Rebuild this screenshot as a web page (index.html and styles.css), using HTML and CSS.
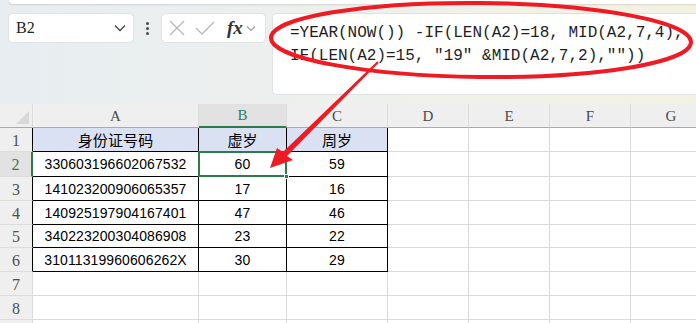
FILE: index.html
```html
<!DOCTYPE html>
<html lang="zh-CN">
<head>
    <meta charset="UTF-8">
    <title>年龄公式</title>
    <link rel="stylesheet" href="styles.css">
</head>
<body>
    <div class="page">
        <div class="topbar">
            <div class="ribbon-edge"></div>
            <div class="formula-row">
                <div class="name-box">
                    <span>B2</span>
                    <svg class="chev" width="12" height="8" viewBox="0 0 12 8"><path d="M1 1.5 L6 6.5 L11 1.5" fill="none" stroke="#444" stroke-width="1.3"/></svg>
                </div>
                <div class="dots"><i></i><i></i><i></i></div>
                <div class="fn-box">
                    <svg width="16" height="16" viewBox="0 0 16 16"><path d="M1 1 L15 15 M15 1 L1 15" stroke="#b8b8b8" stroke-width="1.4"/></svg>
                    <svg width="20" height="16" viewBox="0 0 20 16"><path d="M1 8 L7 14 L19 2" fill="none" stroke="#b8b8b8" stroke-width="1.4"/></svg>
                    <span class="fx">fx</span>
                    <svg width="10" height="7" viewBox="0 0 10 7"><path d="M1 1.5 L5 5.5 L9 1.5" fill="none" stroke="#999" stroke-width="1.1"/></svg>
                </div>
                <div class="formula-box">=YEAR(NOW()) -IF(LEN(A2)=18, MID(A2,7,4),<br>IF(LEN(A2)=15, "19" &amp;MID(A2,7,2),""))</div>
            </div>
        </div>

        <div class="sheet">
            <div class="corner"></div>
            <div class="col">A</div>
            <div class="col sel">B</div>
            <div class="col">C</div>
            <div class="col">D</div>
            <div class="col">E</div>
            <div class="col">F</div>
            <div class="col">G</div>

            <div class="rh edge">1</div>
            <div class="c t head">身份证号码</div>
            <div class="c t head">虚岁</div>
            <div class="c t head">周岁</div>
            <div class="c"></div><div class="c"></div><div class="c"></div><div class="c"></div>

            <div class="rh sel">2</div>
            <div class="c t">330603196602067532</div>
            <div class="c t active">60<span class="handle"></span></div>
            <div class="c t">59</div>
            <div class="c"></div><div class="c"></div><div class="c"></div><div class="c"></div>

            <div class="rh edge">3</div>
            <div class="c t">141023200906065357</div>
            <div class="c t">17</div>
            <div class="c t">16</div>
            <div class="c"></div><div class="c"></div><div class="c"></div><div class="c"></div>

            <div class="rh edge">4</div>
            <div class="c t">140925197904167401</div>
            <div class="c t">47</div>
            <div class="c t">46</div>
            <div class="c"></div><div class="c"></div><div class="c"></div><div class="c"></div>

            <div class="rh edge">5</div>
            <div class="c t">340223200304086908</div>
            <div class="c t">23</div>
            <div class="c t">22</div>
            <div class="c"></div><div class="c"></div><div class="c"></div><div class="c"></div>

            <div class="rh edge">6</div>
            <div class="c t">31011319960606262X</div>
            <div class="c t">30</div>
            <div class="c t">29</div>
            <div class="c"></div><div class="c"></div><div class="c"></div><div class="c"></div>

            <div class="rh">7</div>
            <div class="c"></div><div class="c"></div><div class="c"></div><div class="c"></div><div class="c"></div><div class="c"></div><div class="c"></div>

            <div class="rh">8</div>
            <div class="c"></div><div class="c"></div><div class="c"></div><div class="c"></div><div class="c"></div><div class="c"></div><div class="c"></div>

            <!-- row 9 is only a sliver at the bottom edge -->
            <div class="rh"></div>
            <div class="c"></div><div class="c"></div><div class="c"></div><div class="c"></div><div class="c"></div><div class="c"></div><div class="c"></div>
        </div>

        <!-- red hand-drawn annotation over the screenshot -->
        <svg class="markup" width="696" height="323" viewBox="0 0 696 323">
            <ellipse cx="481" cy="40" rx="210" ry="37" fill="none" stroke="#ee1b24" stroke-width="4" transform="rotate(0.6 481 40)"/>
            <polygon points="377.3,61.3 282.9,151.9 277,148 270,168 293,160 287.1,156.1 378.7,62.7" fill="#ee1b24"/>
        </svg>
    </div>
</body>
</html>
```

FILE: styles.css
```css
* {
    margin: 0;
    padding: 0;
    box-sizing: border-box;
}

body {
    width: 696px;
    height: 323px;
    overflow: hidden;
    background: #ffffff;
    font-family: "Liberation Sans", Arial, sans-serif;
}

.page {
    position: relative;
    width: 696px;
    height: 323px;
    overflow: hidden;
}

/* formula bar area */
.topbar {
    height: 104px;
    background: linear-gradient(to right, #e7edf1 0%, #eef0ec 50%, #f3f2e2 100%);
}

.ribbon-edge {
    height: 4px;
    margin-left: 9px;
    background: #ffffff;
    border-radius: 0 0 0 6px;
    box-shadow: 0 1px 2px rgba(0, 0, 0, 0.12);
}

.formula-row {
    display: flex;
    align-items: flex-start;
    padding: 9px 0 0 8px;
}

.name-box {
    width: 126px;
    height: 30px;
    background: #ffffff;
    border: 1px solid #dfe3e6;
    border-radius: 5px;
    display: flex;
    align-items: center;
    justify-content: space-between;
    padding: 0 7px 0 7px;
    font-family: "Liberation Serif", serif;
    font-size: 16px;
    color: #222;
}

.dots {
    width: 27px;
    height: 30px;
    display: flex;
    flex-direction: column;
    align-items: center;
    justify-content: center;
    gap: 2px;
}

.dots i {
    width: 3px;
    height: 3px;
    border-radius: 50%;
    background: #4a4a4a;
}

.fn-box {
    width: 105px;
    height: 30px;
    background: #ffffff;
    border: 1px solid #dfe3e6;
    border-radius: 5px;
    display: flex;
    align-items: center;
    padding: 0 6px 0 7px;
    gap: 10px;
}

.fn-box .fx {
    font-family: "Liberation Serif", serif;
    font-style: italic;
    font-weight: bold;
    font-size: 19px;
    color: #333;
    margin-left: 2px;
    margin-right: -7px;
}

.formula-box {
    flex: 1;
    margin-left: 6px;
    height: 82px;
    background: #ffffff;
    border: 1px solid #dfe2e4;
    border-right: none;
    border-radius: 5px 0 0 5px;
    padding: 8px 0 0 17px;
    font-family: "Liberation Mono", "DejaVu Sans Mono", monospace;
    font-size: 16px;
    line-height: 23px;
    color: #1e1e1e;
    white-space: nowrap;
    overflow: hidden;
}

/* spreadsheet grid */
.sheet {
    display: grid;
    grid-template-columns: 33px 166px 88px 101px 81px 81px 81px 81px;
    grid-template-rows: 24px 24px 25px 24px 24px 23px 24px 24px 24px 24px;
    font-size: 14px;
    color: #000;
}

.sheet > div {
    border-right: 1px solid #dadada;
    border-bottom: 1px solid #dadada;
    display: flex;
    align-items: center;
    justify-content: center;
}

.corner {
    position: relative;
    background: #efefef;
    border-bottom-color: #aaaaaa !important;
}

.corner::after {
    content: "";
    position: absolute;
    right: 3px;
    bottom: 3px;
    border-style: solid;
    border-width: 0 0 13px 13px;
    border-color: transparent transparent #d8d8d8 transparent;
}

.col {
    background: #efefef;
    border-right-color: #dcdcdc !important;
    border-bottom-color: #a9a9a9 !important;
    font-family: "Liberation Serif", serif;
    font-size: 15px;
    color: #4a4a4a;
    padding-top: 1px;
}

.col.sel {
    background: #e2e2e2;
    color: #2a7d6b;
    border-bottom: 2px solid #2e7a4f !important;
}

.rh {
    background: #efefef;
    font-family: "Liberation Serif", serif;
    font-size: 16px;
    color: #4f4f4f;
    border-bottom-color: #dcdcdc !important;
    padding-top: 2px;
}

.rh.edge {
    border-right-color: #000 !important;
}

.rh.sel {
    background: #e2e2e2;
    color: #2a7d6b;
    border-right: 2px solid #2e7a4f !important;
}

.c {
    background: #ffffff;
    letter-spacing: 0.1px;
}

.c.t {
    border-right-color: #000 !important;
    border-bottom-color: #000 !important;
}

.c.head {
    background: #d9e1f2;
    font-family: "Noto Sans CJK SC", sans-serif;
    font-size: 15px;
}

.c.active {
    position: relative;
}

.c.active::after {
    content: "";
    position: absolute;
    top: -1px;
    left: -1px;
    right: -1px;
    bottom: -1px;
    border: 2px solid #2e7a4f;
}

.handle {
    position: absolute;
    right: -3px;
    bottom: -3px;
    width: 5px;
    height: 5px;
    background: #2e7a4f;
    border: 1px solid #ffffff;
    z-index: 2;
}

.markup {
    position: absolute;
    top: 0;
    left: 0;
    pointer-events: none;
}
```
